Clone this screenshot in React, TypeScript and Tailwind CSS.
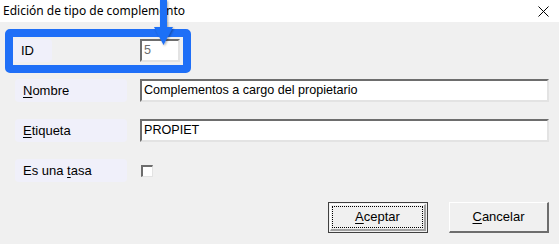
import React from "react";

const font = { fontFamily: '"Liberation Sans", Arial, sans-serif' };

function Label({ children, wide = true }: { children: React.ReactNode; wide?: boolean }) {
  return (
    <div
      className={`flex h-[23px] items-center rounded-[4px] bg-[#f0f0fa] pl-[8px] text-[13px] text-black ${wide ? "w-[112px]" : "w-[39px]"}`}
    >
      {children}
    </div>
  );
}

function TextBox({ value, className = "", muted = false }: { value: string; className?: string; muted?: boolean }) {
  return (
    <div
      className={`flex h-[23px] items-center border-t-2 border-l-2 border-b-2 border-r-2 border-t-[#6d6d6d] border-l-[#6d6d6d] border-b-[#e3e3e3] border-r-[#e3e3e3] bg-white pl-[2px] text-[12.6px] ${muted ? "text-[#6d6d6d]" : "text-black"} ${className}`}
    >
      {value}
    </div>
  );
}

export default function App() {
  return (
    <div className="relative h-[244px] w-[559px] overflow-hidden bg-[#f0f0f0]" style={font}>
      <div className="flex h-[22px] items-center justify-between bg-white pl-[3px] pr-[10px]">
        <span className="text-[12px] text-black" style={{ fontFamily: '"Noto Sans", "Open Sans", sans-serif' }}>
          Edición de tipo de complemento
        </span>
        <svg width="11" height="11" viewBox="0 0 11 11" className="mt-[1px]">
          <path d="M0.5 0.5 L10.5 10.5 M10.5 0.5 L0.5 10.5" stroke="#000" strokeWidth="1" />
        </svg>
      </div>

      <div className="flex flex-col">
        <div className="ml-[5px] mt-[7px] flex h-[44px] w-[186px] items-start rounded-[5px] border-8 border-[#1f6ff7] pt-[2px]">
          <Label wide={false}>ID</Label>
          <TextBox value="5" muted className="ml-[88px] w-[40px]" />
        </div>

        <div className="ml-[15px] mt-[6px] flex flex-col gap-[17px]">
          <div className="flex items-center gap-[13px]">
            <Label>
              <span className="underline underline-offset-2">N</span>ombre
            </Label>
            <TextBox value="Complementos a cargo del propietario" className="w-[409px]" />
          </div>
          <div className="flex items-center gap-[13px]">
            <Label>
              <span className="underline underline-offset-2">E</span>tiqueta
            </Label>
            <TextBox value="PROPIET" className="w-[409px]" />
          </div>
          <div className="flex items-center gap-[14px]">
            <Label>
              <span className="whitespace-pre">{"Es una "}</span>
              <span className="underline underline-offset-2">t</span>asa
            </Label>
            <div className="h-[12px] w-[12px] border-t-2 border-l-2 border-b border-r border-t-[#6d6d6d] border-l-[#6d6d6d] border-b-[#e3e3e3] border-r-[#e3e3e3] bg-white" />
          </div>
        </div>

        <div className="mt-[20px] flex justify-end gap-[21px] pr-[10px]">
          <button className="flex h-[31px] w-[100px] items-center justify-center border border-[#404040] bg-[#f0f0f0] p-[1px] text-[13px] text-black">
            <span className="flex h-full w-full items-center justify-center border-t border-l border-b-2 border-r-2 border-t-white border-l-white border-b-[#a0a0a0] border-r-[#a0a0a0] p-[1px]">
              <span className="flex h-full w-full items-center justify-center border border-dotted border-black">
                <span className="underline underline-offset-2">A</span>ceptar
              </span>
            </span>
          </button>
          <button className="flex h-[31px] w-[100px] items-center justify-center border-t border-l border-b-2 border-r-2 border-t-white border-l-white border-b-[#6d6d6d] border-r-[#6d6d6d] bg-[#f0f0f0] text-[13px] text-black">
            <span className="underline underline-offset-2">C</span>ancelar
          </button>
        </div>
      </div>

      <svg className="absolute left-[150px] top-0" width="28" height="50" viewBox="0 0 28 50">
        <defs>
          <filter id="sh" x="-50%" y="-50%" width="200%" height="200%">
            <feDropShadow dx="1" dy="1" stdDeviation="1.2" floodColor="#000" floodOpacity="0.35" />
          </filter>
        </defs>
        <path d="M10 0 H17 V27 H23 L13.5 45 L4 27 H10 Z" fill="#1f6ff7" filter="url(#sh)" />
      </svg>
    </div>
  );
}
